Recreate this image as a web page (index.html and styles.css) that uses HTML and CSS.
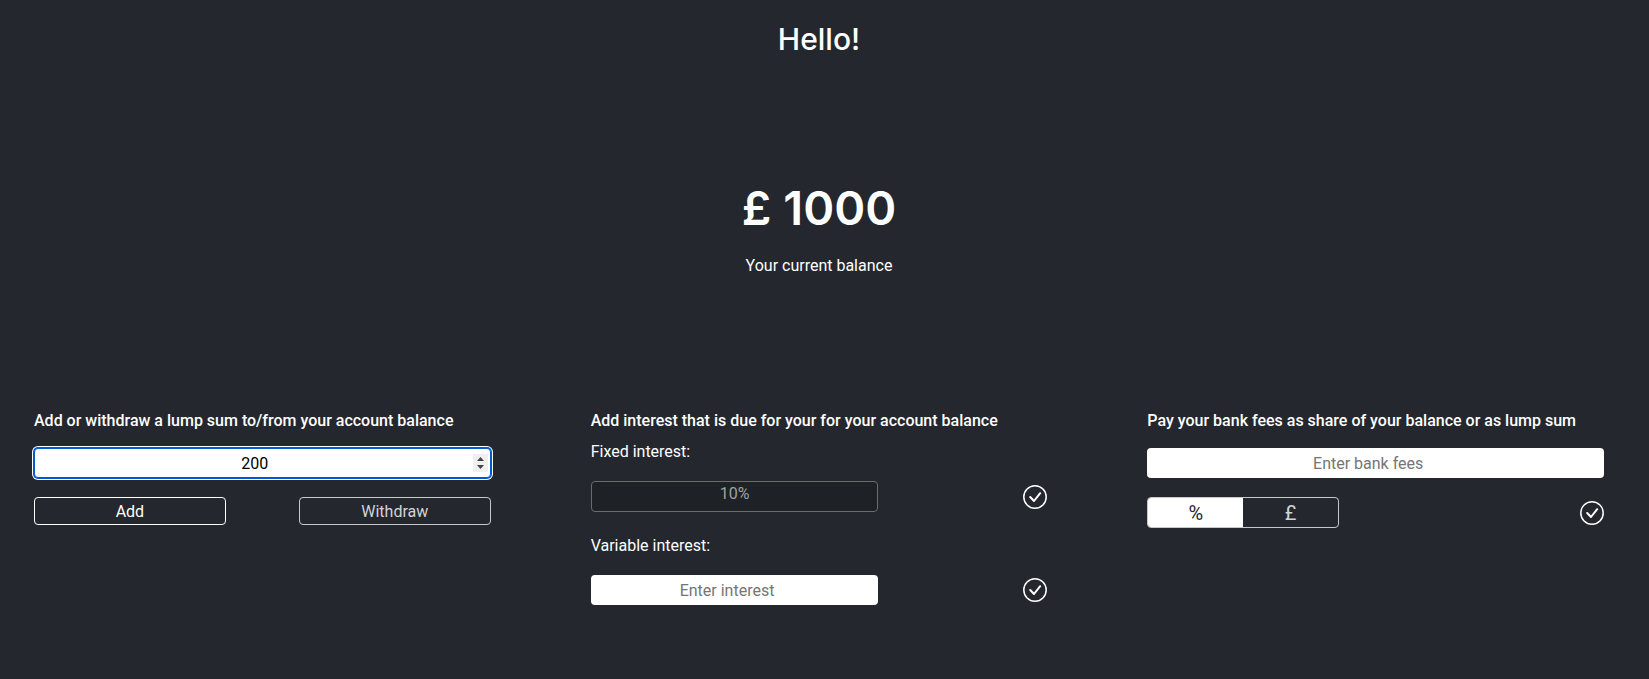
FILE: index.html
```html
<!DOCTYPE html>
<html lang="en">
<head>
<meta charset="utf-8">
<meta name="viewport" content="width=device-width, initial-scale=1">
<title>Account balance</title>
<link rel="stylesheet" href="styles.css">
</head>
<body>
<main class="page">
  <h1 class="greeting">Hello!</h1>
  <section class="balance">
    <p class="amount">£ 1000</p>
    <p class="caption">Your current balance</p>
  </section>
  <div class="actions">
    <section class="panel">
      <h2 class="panel-title"><label for="sum">Add or withdraw a lump sum to/from your account balance</label></h2>
      <input class="field active" id="sum" type="number" value="200">
      <div class="row">
        <button class="button primary" type="button">Add</button>
        <button class="button" type="button">Withdraw</button>
      </div>
    </section>
    <section class="panel">
      <h2 class="panel-title">Add interest that is due for your for your account balance</h2>
      <label class="label" for="fixed">Fixed interest:</label>
      <div class="row interest">
        <input class="field fixed" id="fixed" type="text" value="10%" disabled>
        <button class="confirm" type="button" aria-label="Add fixed interest">
          <svg class="check" viewBox="0 0 24 24"><circle cx="12" cy="12" r="11.2"/><path class="tick" d="M7.2 12 11 16 17.2 8.2"/></svg>
        </button>
      </div>
      <label class="label" for="variable">Variable interest:</label>
      <div class="row interest">
        <input class="field" id="variable" type="number" placeholder="Enter interest">
        <button class="confirm" type="button" aria-label="Add variable interest">
          <svg class="check" viewBox="0 0 24 24"><circle cx="12" cy="12" r="11.2"/><path class="tick" d="M7.2 12 11 16 17.2 8.2"/></svg>
        </button>
      </div>
    </section>
    <section class="panel">
      <h2 class="panel-title"><label for="fees">Pay your bank fees as share of your balance or as lump sum</label></h2>
      <input class="field" id="fees" type="number" placeholder="Enter bank fees">
      <div class="row">
        <div class="toggle">
          <button class="option selected" type="button" aria-pressed="true">%</button>
          <button class="option" type="button" aria-pressed="false">£</button>
        </div>
        <button class="confirm" type="button" aria-label="Pay bank fees">
          <svg class="check" viewBox="0 0 24 24"><circle cx="12" cy="12" r="11.2"/><path class="tick" d="M7.2 12 11 16 17.2 8.2"/></svg>
        </button>
      </div>
    </section>
  </div>
</main>
</body>
</html>
```

FILE: styles.css
```css
* { box-sizing: border-box; }

body {
  margin: 0;
  background: #24272e;
  color: #fff;
  font: 16px/24px Roboto, "Liberation Sans", sans-serif;
}

.page { padding: 19px 45px 72px 34px; }

.greeting {
  margin: 0;
  font: 500 30px/40px Inter, sans-serif;
  text-align: center;
}

.balance { margin-top: 117px; text-align: center; }

.amount {
  margin: 0;
  font: 600 47px/64px Inter, sans-serif;
}

.caption { margin: 14px 0 0; }

.actions {
  display: grid;
  grid-template-columns: repeat(3, 1fr);
  gap: 100px;
  margin-top: 131px;
}

.panel-title {
  margin: 0;
  font-size: 16px;
  font-weight: 500;
  line-height: 24px;
}

.field {
  display: block;
  width: 100%;
  height: 30px;
  margin: 15px 0 0;
  padding: 0 3px;
  border: 0;
  border-radius: 4px;
  background: #fff;
  color: #000;
  font: inherit;
  text-align: center;
}

.field::placeholder { color: #757575; opacity: 1; }

.field.active {
  padding: 0 2px;
  border: 1px solid #0059cf;
  box-shadow: 0 0 0 1px #0059cf, 0 0 0 2px #fff;
}

.field.active::-webkit-inner-spin-button {
  appearance: none;
  width: 15px;
  height: 18px;
  opacity: 1;
  background: #efefef url("data:image/svg+xml,%3Csvg xmlns='http://www.w3.org/2000/svg' width='15' height='18'%3E%3Cpath d='M4 7 7.5 3 11 7zM4 11 7.5 15 11 11z' fill='%23444'/%3E%3C/svg%3E") no-repeat;
}

.row {
  display: flex;
  justify-content: space-between;
  align-items: center;
  margin-top: 19px;
}

.interest { margin-top: 17px; }
.interest .field { width: 63%; margin: 0; }

.interest .fixed {
  height: 31px;
  padding-bottom: 6px;
  border: 1px solid #6c6c6a;
  background: #1e2125;
  color: #a0a1a3;
}

.label { display: block; margin: 22px 0 0; }
.panel-title + .label { margin-top: 7px; }

.button {
  width: 42%;
  height: 28px;
  padding: 1px 0 0;
  border: 1px solid #c8c8c8;
  border-radius: 4px;
  background: transparent;
  color: #d3d4d5;
  font: inherit;
}

.button.primary { border-color: #fff; color: #fff; }

.toggle {
  display: flex;
  width: 42%;
  height: 31px;
  border: 1px solid #c8c8c8;
  border-radius: 4px;
  overflow: hidden;
}

.option {
  flex: 1;
  padding: 0;
  border: 0;
  background: transparent;
  color: #d3d4d5;
  font: inherit;
  font-size: 20px;
}

.option.selected { background: #fff; color: #24272e; }

.confirm {
  display: flex;
  padding: 0;
  border: 0;
  background: none;
  color: #fff;
}

.check {
  width: 24px;
  height: 24px;
  fill: none;
  stroke: currentColor;
  stroke-width: 1.5;
}

.tick {
  stroke-width: 2;
  stroke-linecap: round;
  stroke-linejoin: round;
}
```
